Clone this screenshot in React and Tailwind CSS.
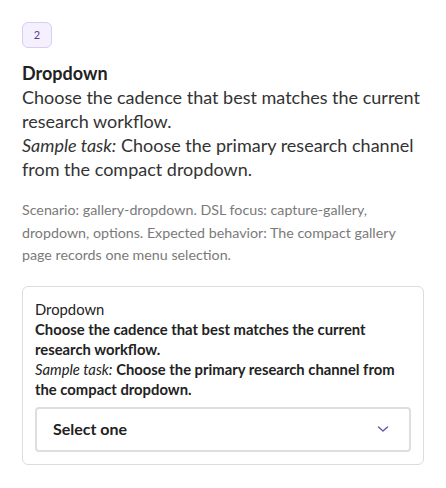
import React from "react";

export default function App() {
  const font = { fontFamily: 'Lato, "Noto Sans", sans-serif' };
  return (
    <div className="min-h-[488px] bg-white px-[22px] pt-[22px] text-[#222]" style={font}>
      <div className="flex h-[26px] w-[30px] items-center justify-center rounded-md border border-[#d8cef3] bg-[#f4f0fd] text-[11px] text-[#5b3fa0]">
        2
      </div>
      <div className="mt-[14px] text-[18px] font-bold leading-[23px] text-[#222]">Dropdown</div>
      <div className="text-[18px] leading-[24px] text-[#333]">
        Choose the cadence that best matches the current research workflow.
        <br />
        <em className="italic">Sample task:</em> Choose the primary research channel from the compact dropdown.
      </div>
      <p className="mt-[18px] text-[14.25px] leading-[22.5px] text-[#7a7a7a]">
        Scenario: gallery-dropdown. DSL focus: capture-gallery, dropdown, options. Expected behavior: The compact gallery page records one menu selection.
      </p>
      <div className="mt-[19px] rounded-md border border-[#dcdcdc] p-[12px]">
        <div className="text-[14.8px] leading-[20px] text-[#222]">Dropdown</div>
        <div className="text-[14.8px] font-bold leading-[20px] text-[#222]">
          Choose the cadence that best matches the current research workflow.
          <br />
          <em className="italic font-normal">Sample task:</em> Choose the primary research channel from the compact dropdown.
        </div>
        <div className="mt-[8px] flex h-[45px] items-center justify-between rounded-[4px] border-2 border-[#dedede] pl-[16px] pr-[20px]">
          <span className="text-[16px] font-bold text-[#222]">Select one</span>
          <svg width="12" height="8" viewBox="0 0 12 8" fill="none">
            <path d="M1.5 2 L6 6 L10.5 2" stroke="#6b52b0" strokeWidth="1.4" strokeLinecap="round" strokeLinejoin="round" />
          </svg>
        </div>
      </div>
    </div>
  );
}
